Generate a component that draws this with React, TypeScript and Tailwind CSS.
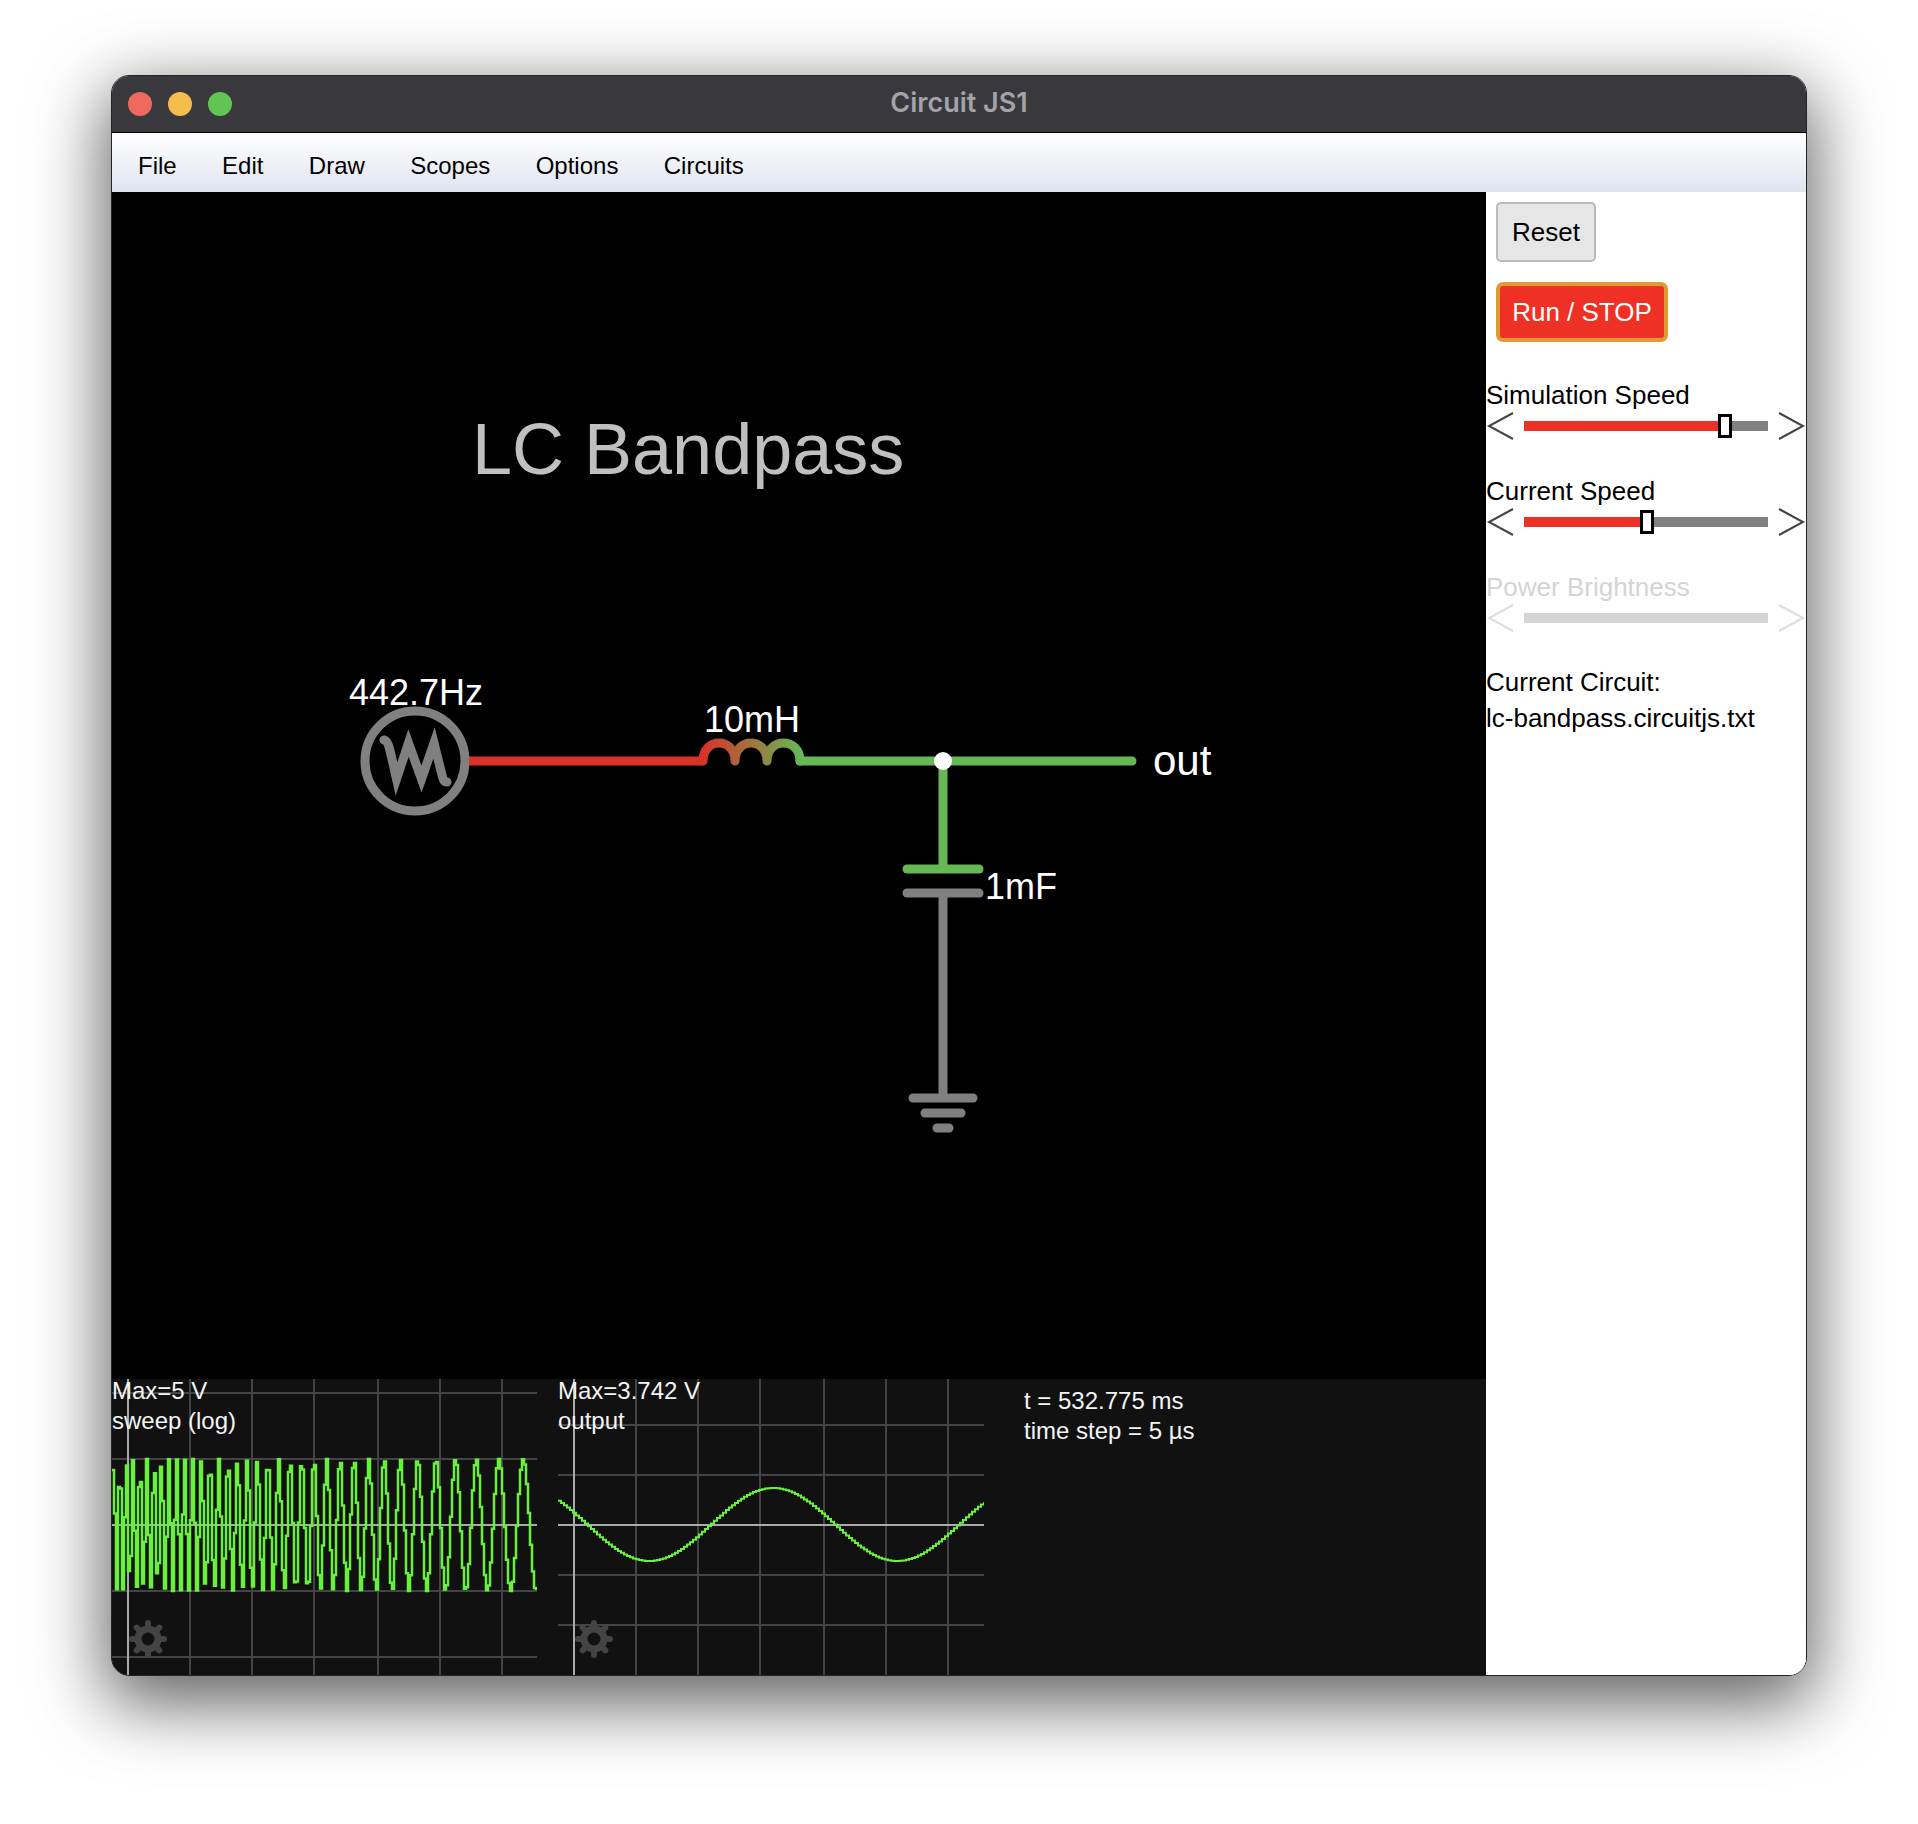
import React from 'react';

const sans = { fontFamily: '"Liberation Sans", Arial, sans-serif' };

// log sweep, sampled the way the scope draws it (stair steps)
function sweepPath() {
  const x0 = 112;
  const x1 = 537;
  const k = 0.00113;
  const phase = (zx: number) => (-1 / (32 * k)) * Math.exp(-k * (zx - 500));
  const peak = phase(1267);
  let d = '';
  for (let x = x0; x <= x1; x += 2) {
    const zx = (x - 100) * 3;
    const y = 1526 - 66 * Math.cos(2 * Math.PI * (phase(zx) - peak)) - 1380;
    const px = x - x0;
    d += d ? ` H${px.toFixed(1)} V${y.toFixed(1)}` : `M0 ${y.toFixed(1)}`;
  }
  return d;
}

function sinePath() {
  let d = '';
  for (let x = 558; x <= 984; x += 3) {
    const y = 1525.5 - 36.5 * Math.cos((2 * Math.PI * (x - 772)) / 248) - 1380;
    const px = x - 558;
    d += d ? ` H${px} V${y.toFixed(1)}` : `M0 ${y.toFixed(1)}`;
  }
  return d;
}

function Gear({ cx, cy }: { cx: number; cy: number }) {
  const teeth = [0, 45, 90, 135, 180, 225, 270, 315];
  return (
    <g stroke="#444444" fill="none">
      <circle cx={cx} cy={cy} r={10} strokeWidth={7} />
      {teeth.map((a) => (
        <line
          key={a}
          x1={cx + 12 * Math.cos((a * Math.PI) / 180)}
          y1={cy + 12 * Math.sin((a * Math.PI) / 180)}
          x2={cx + 16 * Math.cos((a * Math.PI) / 180)}
          y2={cy + 16 * Math.sin((a * Math.PI) / 180)}
          strokeWidth={6}
          strokeLinecap="round"
        />
      ))}
    </g>
  );
}

function Scope({
  width,
  hLines,
  vLines,
  zeroX,
  trace,
  traceWidth,
  gearX,
  max,
  name,
}: {
  width: number;
  hLines: number[];
  vLines: number[];
  zeroX: number;
  trace: string;
  traceWidth: number;
  gearX: number;
  max: string;
  name: string;
}) {
  return (
    <div className="relative h-[296px] shrink-0" style={{ width }}>
      <svg width={width} height={296} className="block">
        {hLines.map((y) => (
          <line key={y} x1={0} x2={width} y1={y} y2={y} stroke="#444444" strokeWidth={2} />
        ))}
        {vLines.map((x) => (
          <line key={x} x1={x} x2={x} y1={0} y2={296} stroke="#444444" strokeWidth={2} />
        ))}
        <line x1={0} x2={width} y1={146} y2={146} stroke="#aaaaaa" strokeWidth={2} />
        <line x1={zeroX} x2={zeroX} y1={0} y2={296} stroke="#aaaaaa" strokeWidth={2} />
        <Gear cx={gearX} cy={260} />
        <path d={trace} fill="none" stroke="#68f03c" strokeWidth={traceWidth} />
      </svg>
      <div className="absolute left-0 top-0 text-[24px] leading-[23px] text-[#f4f4f4]">
        <div className="h-[30px]">{max}</div>
        <div>{name}</div>
      </div>
    </div>
  );
}

function Slider({ label, value, disabled }: { label: string; value?: number; disabled?: boolean }) {
  const arrow = disabled ? '#dddddd' : '#444444';
  return (
    <div className="h-[96px]">
      <div className={`text-[26px] leading-[30px] ${disabled ? 'text-[#d4d4d4]' : 'text-black'}`}>{label}</div>
      <div className="mt-[2px] flex h-[28px] items-center">
        <svg width={38} height={28} className="shrink-0">
          <path d="M27 1 L3 14 L27 27" fill="none" stroke={arrow} strokeWidth={2} />
        </svg>
        <div className={`relative h-[10px] w-[244px] shrink-0 ${disabled ? 'bg-[#d4d4d4]' : 'bg-[#808080]'}`}>
          {value !== undefined && (
            <>
              <div className="h-full bg-[#ee3124]" style={{ width: value }} />
              <div
                className="absolute -top-[7px] h-[24px] w-[14px] border-[3px] border-black bg-white"
                style={{ left: value - 7 }}
              />
            </>
          )}
        </div>
        <svg width={38} height={28} className="shrink-0">
          <path d="M11 1 L35 14 L11 27" fill="none" stroke={arrow} strokeWidth={2} />
        </svg>
      </div>
    </div>
  );
}

export default function App() {
  return (
    <div className="h-[1824px] w-[1918px] overflow-hidden bg-white pl-[111px] pt-[75px]" style={sans}>
      <div className="flex h-[1601px] w-[1696px] flex-col overflow-hidden rounded-[18px] border border-[#222226] shadow-[0_22px_70px_6px_rgba(0,0,0,0.62)]">
        {/* Title bar */}
        <div className="relative flex h-[57px] shrink-0 items-center justify-center border-b border-black bg-[#38383d] pb-[2px]">
          <div className="absolute left-[16px] top-[16px] flex gap-[16px]">
            <div className="h-[24px] w-[24px] rounded-full bg-[#ee6a5f]" />
            <div className="h-[24px] w-[24px] rounded-full bg-[#f5bd4f]" />
            <div className="h-[24px] w-[24px] rounded-full bg-[#61c454]" />
          </div>
          <span className="text-[27px] font-semibold text-[#a3a3a8]" style={{ fontFamily: 'Inter, sans-serif' }}>
            Circuit JS1
          </span>
        </div>

        {/* Menu bar */}
        <div className="flex h-[59px] shrink-0 items-center gap-[45.4px] bg-gradient-to-b from-white to-[#e0e4ef] pl-[26px] pt-[7px] text-[24px] text-black">
          <span>File</span>
          <span>Edit</span>
          <span>Draw</span>
          <span>Scopes</span>
          <span>Options</span>
          <span>Circuits</span>
        </div>

        <div className="flex min-h-0 flex-1">
          {/* Canvas + scopes */}
          <div className="flex w-[1374px] shrink-0 flex-col bg-black">
            <svg width={1374} height={1187} viewBox="112 193 1374 1187" className="block shrink-0">
              <defs>
                <linearGradient id="coil" gradientUnits="userSpaceOnUse" x1="703" y1="0" x2="800" y2="0">
                  <stop offset="0" stopColor="#d93329" />
                  <stop offset="1" stopColor="#66b854" />
                </linearGradient>
              </defs>
              <text x={472} y={475} fontSize={72} fill="#c0c0c0">LC Bandpass</text>

              {/* AC source */}
              <circle cx={415} cy={762} r={50} fill="none" stroke="#808080" strokeWidth={9} />
              <path
                d="M384 741 C389 742 390 752 396.5 780 L408.5 744 L421.5 780 L434 744 L441.5 774 C443 781 444 783 447 783"
                fill="none"
                stroke="#808080"
                strokeWidth={9}
                strokeLinecap="round"
                strokeLinejoin="miter"
                strokeMiterlimit={8}
              />
              <text x={349} y={706} fontSize={36} fill="#ffffff">442.7Hz</text>

              {/* wires */}
              <line x1={469} x2={703} y1={762} y2={762} stroke="#d93329" strokeWidth={9} />
              <path
                d="M703 762 C703 738 735 738 735 762 C735 738 767 738 767 762 C767 738 800 738 800 762"
                fill="none"
                stroke="url(#coil)"
                strokeWidth={9}
                strokeLinecap="round"
                strokeLinejoin="round"
              />
              <text x={704} y={733} fontSize={36} fill="#ffffff">10mH</text>
              <line x1={800} x2={1132} y1={762} y2={762} stroke="#66b854" strokeWidth={9} strokeLinecap="round" />
              <text x={1153} y={776} fontSize={42} fill="#ffffff">out</text>

              {/* capacitor leg */}
              <line x1={943} x2={943} y1={762} y2={870} stroke="#66b854" strokeWidth={9} />
              <line x1={907} x2={979} y1={870} y2={870} stroke="#66b854" strokeWidth={9} strokeLinecap="round" />
              <line x1={907} x2={979} y1={894} y2={894} stroke="#808080" strokeWidth={9} strokeLinecap="round" />
              <line x1={943} x2={943} y1={894} y2={1099} stroke="#808080" strokeWidth={9} />
              <text x={985} y={900} fontSize={36} fill="#ffffff">1mF</text>
              <circle cx={943} cy={762} r={9} fill="#ffffff" />

              {/* ground */}
              <line x1={913} x2={973} y1={1099} y2={1099} stroke="#808080" strokeWidth={9} strokeLinecap="round" />
              <line x1={925} x2={961} y1={1114} y2={1114} stroke="#808080" strokeWidth={9} strokeLinecap="round" />
              <line x1={937} x2={949} y1={1129} y2={1129} stroke="#808080" strokeWidth={9} strokeLinecap="round" />
            </svg>

            <div className="flex min-h-0 flex-1 bg-[#111111]">
              <Scope
                width={425}
                hLines={[14, 80, 212, 278]}
                vLines={[78, 140, 202, 266, 328, 390]}
                zeroX={16}
                trace={sweepPath()}
                traceWidth={2.5}
                gearX={36}
                max="Max=5 V"
                name="sweep (log)"
              />
              <div className="w-[21px] shrink-0" />
              <Scope
                width={426}
                hLines={[46, 96, 196, 246]}
                vLines={[78, 140, 202, 266, 328, 390]}
                zeroX={16}
                trace={sinePath()}
                traceWidth={2}
                gearX={36}
                max="Max=3.742 V"
                name="output"
              />
              <div className="pl-[40px] pt-[7px] text-[24px] leading-[30px] text-[#f4f4f4]">
                <div>t = 532.775 ms</div>
                <div>time step = 5 µs</div>
              </div>
            </div>
          </div>

          {/* Sidebar */}
          <div className="min-w-0 flex-1 bg-white text-black">
            <div className="flex flex-col items-start gap-[20px] pl-[10px] pt-[10px]">
              <button className="h-[60px] w-[100px] rounded-[5px] border-2 border-[#bbbbbb] bg-[#e6e6e6] text-[26px]">
                Reset
              </button>
              <button className="h-[60px] w-[172px] rounded-[7px] border-4 border-[#e09a33] bg-[#ee3124] text-[26px] text-white">
                Run / STOP
              </button>
            </div>
            <div className="mt-[38px]">
              <Slider label="Simulation Speed" value={201} />
              <Slider label="Current Speed" value={123} />
              <Slider label="Power Brightness" disabled />
            </div>
            <div className="-mt-[4px] text-[26px] leading-[36px]">
              <div>Current Circuit:</div>
              <div>lc-bandpass.circuitjs.txt</div>
            </div>
          </div>
        </div>
      </div>
    </div>
  );
}
